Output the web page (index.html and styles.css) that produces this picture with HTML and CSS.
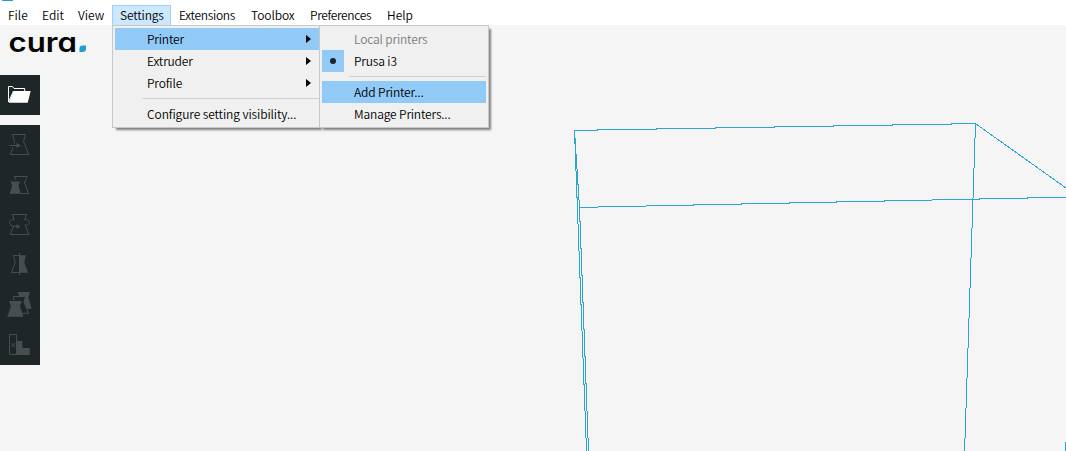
FILE: index.html
```html
<!DOCTYPE html>
<html lang="en">
<head>
<meta charset="utf-8">
<title>Cura</title>
<link rel="stylesheet" href="styles.css">
</head>
<body>
<div class="app">
  <header class="titlebar"><span class="app-mark"></span></header>
  <nav class="menubar">
    <span class="menu-title file">File</span>
    <span class="menu-title edit">Edit</span>
    <span class="menu-title view">View</span>
    <span class="menu-title settings open">Settings</span>
    <span class="menu-title extensions">Extensions</span>
    <span class="menu-title toolbox">Toolbox</span>
    <span class="menu-title preferences">Preferences</span>
    <span class="menu-title help">Help</span>
  </nav>
  <main class="workspace">
    <svg class="viewport" viewBox="0 25 1066 426" width="1066" height="426">
      <path d="M574.500 130.400L975.500 123.600L1066 188M975.500 123.500L964.600 451M579.500 207.400L1066 197.200M574.500 130.500L586.500 451M574.500 130.500L579.500 207.500L588.500 451M1065.500 442V451"/>
    </svg>
    <aside class="side">
      <svg class="logo" width="90" height="36" viewBox="0 0 90 36">
        <text x="8.500" y="27" textLength="68.500" lengthAdjust="spacingAndGlyphs">cura</text>
        <path d="M82.500 20.500h3.500v3.500q0 3-3.500 3h-3v-3.500q0-3 3-3z"/>
      </svg>
      <div class="tools">
        <svg class="tool folder" viewBox="0 0 40 40"><path class="line" d="M8.500 27V11.500h4l1.500 2h10.700V16M8.500 27L13.500 16"/><path class="fill" d="M13.700 16H30.700L27.700 27.700H8.700z"/></svg>
      </div>
      <div class="tools">
        <svg class="tool" viewBox="0 0 40 40"><path class="line" d="M14.200 18.500L14.500 16.500 12.300 9.500H25.500L23.500 16.500 28.800 29.500H10.300L13 22.500M9.500 20.500H18"/><path class="fill" d="M16.500 18l4.500 2.500-4.500 2.500z"/></svg>
        <svg class="tool" viewBox="0 0 40 40"><path class="line" d="M16 15L14.300 11.500H27L24.500 18 28.700 28.500H20"/><path class="fill" d="M10.500 16.500H20L18.500 20.500 20.700 28.700H9.700L12.300 20.500z"/></svg>
        <svg class="tool" viewBox="0 0 40 40"><path class="line" d="M14 14.500L12.300 9.500H26.700L24.500 15M25 19.500L29 29.500H10.300L13.500 21M14.500 14.500C8 14.500 8 20.500 14 21.200H18M24.500 14.500C31 14.500 31 20 25 20.500"/><path class="fill" d="M16.500 19l4 2.500-4 2.500z"/></svg>
        <svg class="tool" viewBox="0 0 40 40"><path class="line" d="M19.500 10.500H13.300L15.300 17.500 11.500 27.500H19.500M19.500 8V30"/><path class="fill" d="M19.500 10.300H26L24.300 17.500 28 27.700H19.500z"/></svg>
        <svg class="tool" viewBox="0 0 40 40"><path class="line" d="M14 15L13.300 11.500H25.500L24 17.500 28.500 28.300H22"/><path class="fill" d="M9 16H21.700L20 21.300 23.300 31.700H7.300L11 21.500zM17.700 7H30L28.300 12.700 31.700 23.700H27L24 16.500 25.500 11H19z"/></svg>
        <svg class="tool" viewBox="0 0 40 40"><path class="line" d="M9.500 9.500H16.500V29.500H9.500zM11.500 18l3.500 4M15 18l-3.500 4"/><path class="fill" d="M16.500 16H22.300V23H29.700V30H16.500z"/></svg>
      </div>
    </aside>
  </main>

  <div class="popup settings-menu">
    <div class="item active"><span>Printer</span><i class="arrow"></i></div>
    <div class="item"><span>Extruder</span><i class="arrow"></i></div>
    <div class="item"><span>Profile</span><i class="arrow"></i></div>
    <div class="divider"></div>
    <div class="item"><span class="long">Configure setting visibility...</span></div>
  </div>
  <div class="popup printer-menu">
    <div class="item disabled"><span>Local printers</span></div>
    <div class="item"><b class="radio"></b><span>Prusa i3</span></div>
    <div class="divider"></div>
    <div class="item active"><span>Add Printer...</span></div>
    <div class="item"><span>Manage Printers...</span></div>
  </div>
</div>
</body>
</html>
```
FILE: styles.css
```css
* { box-sizing: border-box; }
body { margin: 0; background: #f5f5f5; }
.app {
  position: relative;
  width: 1066px;
  height: 451px;
  overflow: hidden;
  font: 350 12px/20px "Noto Sans CJK KR", "Noto Sans", sans-serif;
  color: #000;
}
.titlebar { height: 5px; background: #fff; }
.app-mark { display: block; width: 11px; height: 1px; margin-left: 2px; background: #239fcf; }
.menubar { display: flex; height: 20px; background: #fff; }
.menu-title { height: 20px; padding-left: 8px; white-space: nowrap; line-height: 19px; }
.file { width: 34px; }
.edit { width: 36px; }
.view { width: 42px; }
.settings { width: 59px; letter-spacing: -0.15px; }
.extensions { width: 72px; letter-spacing: -0.3px; }
.toolbox { width: 59px; letter-spacing: -0.1px; }
.preferences { width: 77px; letter-spacing: -0.35px; }
.help { width: 41px; }
.open { padding-left: 7px; border: 1px solid #99d1ff; border-bottom-width: 0; background: #cce8ff; line-height: 17px; }

.workspace { display: grid; height: 426px; }
.workspace > * { grid-area: 1 / 1; }
.viewport path { fill: none; stroke: #2ba5ca; stroke-width: 1.01; shape-rendering: crispEdges; }
.side { display: flex; flex-direction: column; gap: 10px; width: 90px; }
.logo { margin-bottom: 4px; }
.logo text { font: 600 27px Inter, sans-serif; font-feature-settings: "cv11"; fill: #050505; }
.logo path { fill: #239fcf; }
.tools { display: flex; flex-direction: column; width: 40px; background: #1f2628; }
.tool { display: block; width: 40px; height: 40px; color: #484e50; }
.folder { color: #fff; }
.line { fill: none; stroke: currentColor; stroke-width: 1; }
.fill { fill: currentColor; }

.popup {
  position: absolute;
  top: 25px;
  height: 103px;
  padding: 2px;
  border: 1px solid #c8c8c8;
  background: #f0f0f0;
  box-shadow: 3px 3px 2px -1px #808080;
  letter-spacing: -0.15px;
}
.settings-menu { left: 112px; width: 208px; padding-right: 0; }
.printer-menu { left: 319px; width: 170px; }
.item { display: flex; align-items: center; height: 22px; padding-left: 32px; white-space: nowrap; line-height: 22px; }
.long { letter-spacing: -0.1px; }
.active { background: #91c9f7; }
.disabled { color: #7b7b7b; }
.arrow { margin-left: auto; margin-right: 8px; border-left: 5px solid #000; border-top: 4px solid transparent; border-bottom: 4px solid transparent; }
.divider { height: 1px; margin: 4px 0 4px 27px; background: #d0d0d0; }
.radio { display: grid; place-items: center; width: 22px; height: 22px; margin: 0 10px 0 -32px; background: #91c9f7; }
.radio::before { content: ""; width: 6px; height: 6px; border-radius: 50%; background: #222; }
```
